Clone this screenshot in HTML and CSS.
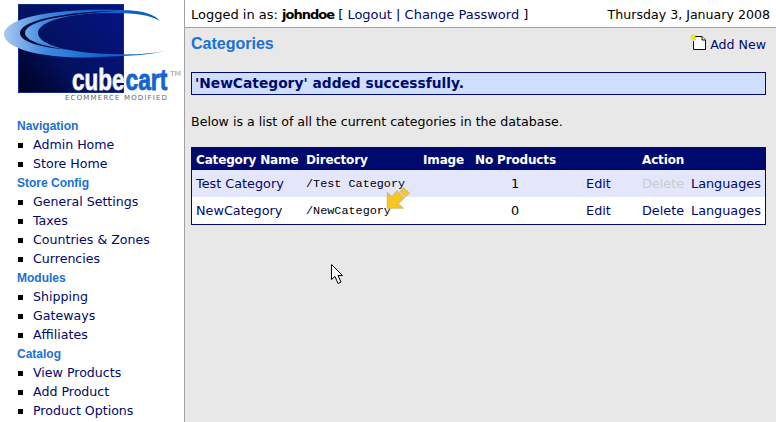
FILE: index.html
```html
<!DOCTYPE html>
<html lang="en">
<head>
<meta charset="utf-8">
<title>Categories</title>
<link rel="stylesheet" href="styles.css">
</head>
<body>
<div class="page">
  <aside class="sidebar">
    <div class="logo">
      <svg class="logo-art" width="184" height="104" viewBox="0 0 184 104">
        <defs>
          <linearGradient id="sq" x1="0" y1="1" x2="1" y2="0.3">
            <stop offset="0" stop-color="#000020"/>
            <stop offset="0.45" stop-color="#03115f"/>
            <stop offset="1" stop-color="#06137e"/>
          </linearGradient>
          <linearGradient id="sw" x1="0" y1="0" x2="1" y2="0">
            <stop offset="0" stop-color="#a9c8ee"/>
            <stop offset="0.25" stop-color="#3f8be0"/>
            <stop offset="0.6" stop-color="#1265cf"/>
            <stop offset="1" stop-color="#0f5cc4"/>
          </linearGradient>
        </defs>
        <rect x="18.500" y="4.500" width="105" height="88" fill="url(#sq)" stroke="#12307f"/>
        <path d="M4 33 C8 18 50 8 122 10 C145 10.500 155 15 160 21 C150 15 135 13 115 13 C75 12 38 20 38 33 C38 45 70 53 110 54 C130 55 150 54 165 51 C150 55 125 56 100 57 C50 60 2 50 4 33 Z" fill="url(#sw)"/>
        <path d="M20 33 C20 22 55 12 120 10.500 C70 14 25 20 25 33 C25 41 45 47 72 50 C42 48 20 42 20 33 Z" fill="#020a3f"/>
        <text class="logo-cube" transform="translate(72 89.500) scale(.75 1)">cube</text>
        <text class="logo-cart" transform="translate(125.500 89.500) scale(.76 1)">cart</text>
        <text class="logo-tm" x="170" y="76" textLength="11" lengthAdjust="spacingAndGlyphs">TM</text>
        <text class="logo-tag" x="65" y="100" textLength="102">ECOMMERCE MODIFIED</text>
      </svg>
    </div>
    <nav class="nav">
      <h4>Navigation</h4>
      <ul>
        <li><a href="#">Admin Home</a></li>
        <li><a href="#">Store Home</a></li>
      </ul>
      <h4>Store Config</h4>
      <ul>
        <li><a href="#">General Settings</a></li>
        <li><a href="#">Taxes</a></li>
        <li><a href="#">Countries &amp; Zones</a></li>
        <li><a href="#">Currencies</a></li>
      </ul>
      <h4>Modules</h4>
      <ul>
        <li><a href="#">Shipping</a></li>
        <li><a href="#">Gateways</a></li>
        <li><a href="#">Affiliates</a></li>
      </ul>
      <h4>Catalog</h4>
      <ul>
        <li><a href="#">View Products</a></li>
        <li><a href="#">Add Product</a></li>
        <li><a href="#">Product Options</a></li>
      </ul>
    </nav>
  </aside>
  <div class="content">
    <header class="topbar">
      <div>Logged in as: <b>johndoe</b> [ <a href="#">Logout</a> | <a href="#">Change Password</a> ]</div>
      <div class="date">Thursday 3, January 2008</div>
    </header>
    <main class="main">
      <div class="title-row">
        <h1>Categories</h1>
        <a class="add-new" href="#">
          <svg width="17" height="17" viewBox="0 0 17 17">
            <path d="M3.500 3.500H12L15.500 7V16.500H3.500Z" fill="#fff" stroke="#111"/>
            <path d="M12 3.500V7H15.500" fill="#eee" stroke="#111"/>
            <path d="M0 4.500H7M3.500 1V8M1 2L6 7M6 2L1 7" stroke="#f2e600" stroke-width="1.200"/>
          </svg>
          <span>Add New</span>
        </a>
      </div>
      <div class="notice">'NewCategory' added successfully.</div>
      <p class="intro">Below is a list of all the current categories in the database.</p>
      <div class="table-wrap">
        <table class="cats">
          <colgroup>
            <col class="c1"><col class="c2"><col class="c3"><col class="c4"><col class="c5"><col class="c6"><col class="c7">
          </colgroup>
          <thead>
            <tr><th>Category Name</th><th>Directory</th><th>Image</th><th class="ctr">No Products</th><th></th><th colspan="2">Action</th></tr>
          </thead>
          <tbody>
            <tr class="alt"><td><a href="#">Test Category</a></td><td class="mono">/Test Category</td><td></td><td class="ctr">1</td><td class="ctr"><a href="#">Edit</a></td><td class="off">Delete</td><td><a href="#">Languages</a></td></tr>
            <tr><td><a href="#">NewCategory</a></td><td class="mono">/NewCategory</td><td></td><td class="ctr">0</td><td class="ctr"><a href="#">Edit</a></td><td><a href="#">Delete</a></td><td><a href="#">Languages</a></td></tr>
          </tbody>
        </table>
        <svg class="arrow" width="26" height="24" viewBox="0 0 26 24">
          <path d="M2.500 7V22H17.500L13 17.500L19 12L12 5L7 11Z" fill="#f7c81a" stroke="#dcbc6c" stroke-width="1.500"/>
          <path d="M15.500 5.500L18.500 2L24 7L20.500 10.500Z" fill="#f7c81a" stroke="#dcbc6c" stroke-width="1.500"/>
        </svg>
      </div>
      <svg class="cursor" width="14" height="22" viewBox="0 0 14 22">
        <path d="M1.500 1.500V16.500L5 13.500L8 20.500L11 19L8 12.500H12.500Z" fill="#fff" stroke="#000"/>
      </svg>
    </main>
  </div>
</div>
</body>
</html>
```
FILE: styles.css
```css
html, body {
  margin: 0;
  padding: 0;
  height: 100%;
  overflow: hidden;
}
body {
  font-family: "DejaVu Sans", Verdana, sans-serif;
  font-size: 12.600px;
  color: #000;
  background: #fff;
}
a {
  color: #00086e;
  text-decoration: none;
}
.page {
  display: flex;
  height: 422px;
}
.sidebar {
  flex: 0 0 184px;
  width: 184px;
  box-sizing: border-box;
  background: #fff;
}
.logo {
  height: 117px;
}
.logo-art {
  display: block;
}
.logo-cube, .logo-cart {
  font-family: "Liberation Sans", Arial, sans-serif;
  font-weight: 700;
  font-size: 30px;
}
.logo-cube { fill: #fff; stroke: #e4eaf7; stroke-width: .8px; }
.logo-cart { fill: #1265cf; stroke: #1265cf; stroke-width: .8px; }
.logo-tm {
  font-family: "DejaVu Sans", sans-serif;
  font-size: 7px;
  fill: #999;
}
.logo-tag {
  font-family: "DejaVu Sans", sans-serif;
  font-size: 7px;
  fill: #666;
}
.nav h4 {
  margin: 0;
  padding-left: 17px;
  font: 700 12px/19px "Liberation Sans", Arial, sans-serif;
  color: #1a70d6;
}
.nav ul {
  margin: 0;
  padding: 0;
  list-style: none;
}
.nav li {
  position: relative;
  height: 19px;
  line-height: 17px;
  padding-left: 33px;
}
.nav li::before {
  content: "";
  position: absolute;
  left: 18px;
  top: 7px;
  width: 5px;
  height: 5px;
  background: #000;
}
.content {
  flex: 1;
  min-width: 0;
  border-left: 1px solid #a0a0a0;
  box-sizing: border-box;
  display: flex;
  flex-direction: column;
}
.topbar {
  flex: 0 0 28px;
  box-sizing: border-box;
  height: 28px;
  display: flex;
  justify-content: space-between;
  align-items: center;
  padding: 2px 6px 0 6px;
  border-bottom: 1px solid #a0a0a0;
  background: #fff;
  font-size: 13px;
}
.topbar b {
  letter-spacing: -1px;
}
.topbar .date {
  font-size: 12.600px;
}
.main {
  position: relative;
  flex: 1;
  background: #e8e8e8;
  padding: 0 10px 0 6px;
}
.title-row {
  display: flex;
  justify-content: space-between;
  align-items: flex-start;
  height: 44px;
}
.title-row h1 {
  margin: 6px 0 0;
  font: 700 16px/19px "Liberation Sans", Arial, sans-serif;
  color: #1a70d6;
}
.add-new {
  display: flex;
  align-items: flex-start;
  gap: 3px;
  margin-top: 5px;
}
.add-new span {
  line-height: 16px;
  margin-top: 4px;
}
.notice {
  height: 23px;
  box-sizing: border-box;
  line-height: 21px;
  padding-left: 3px;
  border: 1px solid #000a6e;
  background: #cfdeff;
  color: #000a6e;
  font-weight: 700;
  font-size: 13.800px;
}
.intro {
  margin: 19px 0 0;
  line-height: 16px;
  height: 33px;
}
.table-wrap {
  position: relative;
}
.cats {
  width: 100%;
  table-layout: fixed;
  border-collapse: separate;
  border-spacing: 0;
  border: 1px solid #000a6e;
  background: #fff;
}
.c1 { width: 110px; }
.c2 { width: 117px; }
.c3 { width: 52px; }
.c4 { width: 88px; }
.c5 { width: 79px; }
.c6 { width: 49px; }
.cats th, .cats td {
  padding: 0 4px;
  text-align: left;
  white-space: nowrap;
  font-size: 12.800px;
}
.cats th {
  box-sizing: border-box;
  height: 22px;
  padding-top: 1px;
  background: #000a6e;
  color: #fff;
  font-weight: 700;
  font-size: 12px;
  letter-spacing: -.15px;
}
.cats td {
  height: 27px;
}
.cats .ctr {
  text-align: center;
}
.cats .alt td {
  background: #e4e6fb;
}
.cats .mono {
  font-family: "Liberation Mono", "Courier New", monospace;
  font-size: 11.800px;
}
.cats .off {
  color: #ccc;
}
.arrow {
  position: absolute;
  left: 194px;
  top: 39px;
}
.cursor {
  position: absolute;
  left: 145px;
  top: 235px;
}
```
